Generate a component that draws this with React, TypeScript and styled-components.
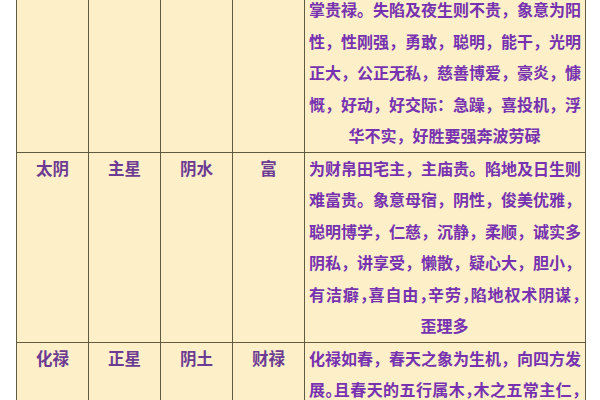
import React from 'react';
import styled, {createGlobalStyle} from 'styled-components';

interface ILine {
    text: string;
    last?: boolean;
    tight?: boolean;
}

interface IRow {
    name: string;
    kind: string;
    element: string;
    meaning: string;
    lines: ILine[];
}

const rows: IRow[] = [
    {
        name: '',
        kind: '',
        element: '',
        meaning: '',
        lines: [
            {text: '掌贵禄。失陷及夜生则不贵，象意为阳'},
            {text: '性，性刚强，勇敢，聪明，能干，光明'},
            {text: '正大，公正无私，慈善博爱，豪炎，慷'},
            {text: '慨，好动，好交际：急躁，喜投机，浮'},
            {text: '华不实，好胜要强奔波劳碌', last: true},
        ],
    },
    {
        name: '太阴',
        kind: '主星',
        element: '阴水',
        meaning: '富',
        lines: [
            {text: '为财帛田宅主，主庙贵。陷地及日生则'},
            {text: '难富贵。象意母宿，阴性，俊美优雅，'},
            {text: '聪明博学，仁慈，沉静，柔顺，诚实多'},
            {text: '阴私，讲享受，懒散，疑心大，胆小，'},
            {text: '有洁癖，喜自由，辛劳，陷地权术阴谋，', tight: true},
            {text: '歪理多', last: true},
        ],
    },
    {
        name: '化禄',
        kind: '正星',
        element: '阴土',
        meaning: '财禄',
        lines: [
            {text: '化禄如春，春天之象为生机，向四方发'},
            {text: '展。且春天的五行属木，木之五常主仁，', tight: true},
            {text: '主慈爱、善良、温和，故化禄为福德', last: true},
        ],
    },
];

const App = () => {
    return (
        <>
            <GlobalStyle />
            <Page>
                <Table>
                    <colgroup>
                        <col style={{width: 72}} />
                        <col style={{width: 72}} />
                        <col style={{width: 72}} />
                        <col style={{width: 72}} />
                        <col />
                    </colgroup>
                    <tbody>
                        {rows.map((row, i) => (
                            <tr key={i}>
                                <Label>{row.name}</Label>
                                <Label>{row.kind}</Label>
                                <Label>{row.element}</Label>
                                <Label>{row.meaning}</Label>
                                <Desc>
                                    {row.lines.map((line, j) => (
                                        <Line key={j} last={line.last} tight={line.tight}>
                                            {line.text}
                                        </Line>
                                    ))}
                                </Desc>
                            </tr>
                        ))}
                    </tbody>
                </Table>
            </Page>
        </>
    );
};

export default App;

const GlobalStyle = createGlobalStyle`
    html, body {
        margin: 0;
        padding: 0;
        background: #fff;
        height: 400px;
        overflow: hidden;
    }
    body {
        font-family: "Noto Sans CJK SC", "Noto Sans", sans-serif;
    }
`;

const Page = styled.div`
    width: 600px;
    height: 400px;
    overflow: hidden;
    padding-left: 16px;
    box-sizing: border-box;
`;

const Table = styled.table`
    margin-top: -7px;
    width: 570px;
    border-collapse: collapse;
    table-layout: fixed;
    background: #fdf0c8;
`;

const Label = styled.td`
    border: 1px solid #5f5a42;
    vertical-align: top;
    text-align: center;
    padding: 0;
    color: #6c3b93;
    font-weight: 700;
    font-size: 16.5px;
    line-height: 31.5px;
`;

const Desc = styled.td`
    border: 1px solid #5f5a42;
    vertical-align: top;
    padding: 0 5px 0 4px;
    color: #7632b0;
    font-weight: 700;
    font-size: 16px;
    line-height: 31.5px;
`;

const Line = styled.div<{last?: boolean; tight?: boolean}>`
    white-space: nowrap;
    text-align: ${(p) => (p.last ? 'center' : 'justify')};
    text-align-last: ${(p) => (p.last ? 'center' : 'justify')};
    font-feature-settings: ${(p) => (p.tight ? '"halt"' : 'normal')};
`;
